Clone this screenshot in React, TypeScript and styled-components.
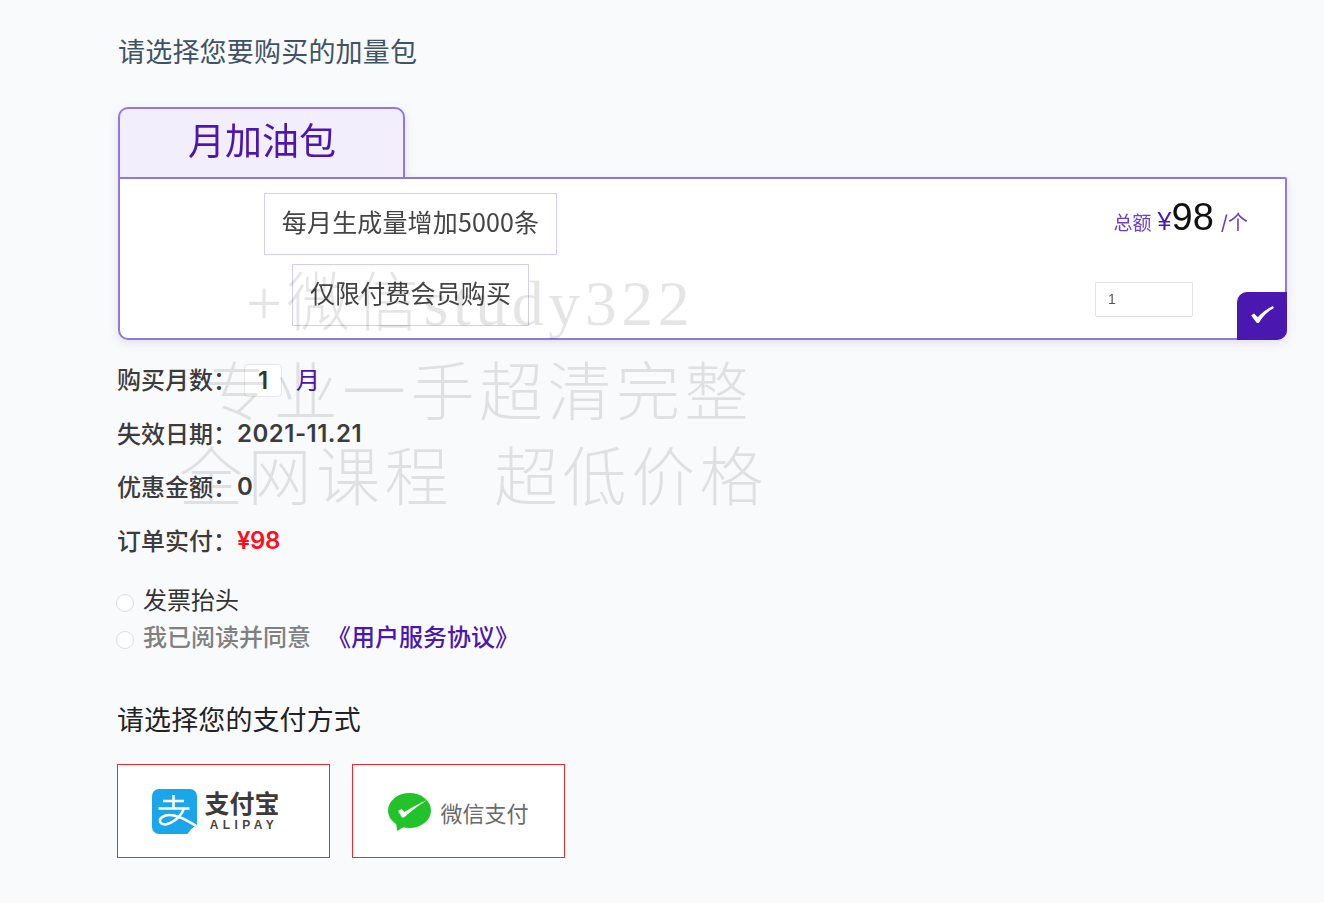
import React from 'react';
import styled, { createGlobalStyle } from 'styled-components';

const purple = '#4a17b0';
const cjk = '"Noto Sans CJK SC", sans-serif';

const GlobalStyle = createGlobalStyle`
  html, body {
    margin: 0;
    padding: 0;
    background: #f9fafc;
    font-family: Inter, ${cjk};
  }
  * {
    box-sizing: border-box;
  }
`;

const rows = [
  { label: '失效日期：', value: '2021-11.21' },
  { label: '优惠金额：', value: '0' },
];

export default function App() {
  return (
    <Page>
      <GlobalStyle />
      <Title>请选择您要购买的加量包</Title>

      <PackageBlock>
        <PackageTab>
          <TabLabel>月加油包</TabLabel>
        </PackageTab>
        <PackageCard>
          <TagColumn>
            <Tag>每月生成量增加5000条</Tag>
            <Tag>仅限付费会员购买</Tag>
          </TagColumn>
          <PriceColumn>
            <PriceLine>
              <PriceNote>总额</PriceNote>
              <Currency>¥</Currency>
              <Amount>98</Amount>
              <PriceUnit>/个</PriceUnit>
            </PriceLine>
            <CountInput defaultValue="1" />
          </PriceColumn>
          <CheckCorner>
            <svg width="23" height="17" viewBox="0 0 24 18" fill="#fff">
              <path d="M0 10 L3 8 L7 12 C11 7 17 3 23 0 L24 2 C17 6 12 11 8 18 L6 18 Z" />
            </svg>
          </CheckCorner>
        </PackageCard>
      </PackageBlock>

      <Summary>
        <SummaryRow>
          <RowLabel>购买月数：</RowLabel>
          <MonthInput defaultValue="1" />
          <MonthUnit>月</MonthUnit>
        </SummaryRow>
        {rows.map((row) => (
          <SummaryRow key={row.label}>
            <RowLabel>{row.label}</RowLabel>
            <RowValue>{row.value}</RowValue>
          </SummaryRow>
        ))}
        <SummaryRow>
          <RowLabel>订单实付：</RowLabel>
          <RowValue $red>¥98</RowValue>
        </SummaryRow>
      </Summary>

      <Options>
        <OptionRow>
          <Radio type="radio" />
          <OptionText>发票抬头</OptionText>
        </OptionRow>
        <OptionRow>
          <Radio type="radio" />
          <OptionText $muted>我已阅读并同意</OptionText>
          <AgreementLink>《用户服务协议》</AgreementLink>
        </OptionRow>
      </Options>

      <PayTitle>请选择您的支付方式</PayTitle>
      <PayMethods>
        <PayButton>
          <AlipayLogo>
            <svg width="45" height="45" viewBox="0 0 45 45">
              <rect width="45" height="45" rx="7" fill="#1ba5ea" />
              <path d="M45 36 C41 38 38 41 35.5 45 L45 45 Z" fill="#fff" />
              <g fill="none" stroke="#fff" strokeWidth="2.6">
                <path d="M11 12 H32 M21.500 6 V19 M6.500 19.500 H37.500" />
                <path d="M32 19.500 C28 30 15 38 9.500 34.500 C4.500 30 12 24.500 22 26.500 C30 28 38 33 45 37.500" />
              </g>
            </svg>
            <AlipayWords>
              <AlipayName>支付宝</AlipayName>
              <AlipayLatin>ALIPAY</AlipayLatin>
            </AlipayWords>
          </AlipayLogo>
        </PayButton>
        <PayButton>
          <WechatLogo>
            <svg width="43" height="38" viewBox="0 0 43 38">
              <ellipse cx="21.500" cy="17.500" rx="21.500" ry="17.500" fill="#22c32a" />
              <path d="M8 28 L9 38 L19 32 Z" fill="#22c32a" />
              <path d="M10 18 L13.500 16 L16.500 19 C23 15 30 11 39 7 C31 12 23 18 16 24.500 L14 24.500 Z" fill="#fff" />
            </svg>
            <WechatName>微信支付</WechatName>
          </WechatLogo>
        </PayButton>
      </PayMethods>

      <Watermark>
        <WatermarkLine $indent={246}>+微信study322</WatermarkLine>
        <WatermarkLine $indent={205} $gap={4}>专业一手超清完整</WatermarkLine>
        <WatermarkLine $indent={179} $gap={-1}>全网课程  超低价格</WatermarkLine>
      </Watermark>
    </Page>
  );
}

const Page = styled.div`
  position: relative;
  width: 1324px;
  height: 903px;
  overflow: hidden;
  padding: 32px 0 0 117px;
`;

const Title = styled.h2`
  margin: 0 0 35px 1px;
  font-size: 27px;
  line-height: 42px;
  height: 40px;
  font-weight: 400;
  letter-spacing: 0.2px;
  color: #3f5365;
`;

const PackageBlock = styled.div`
  width: 1169px;
  margin-left: 1px;
  filter: drop-shadow(0 3px 5px rgba(60, 50, 110, 0.13));
`;

const PackageTab = styled.div`
  width: 287px;
  height: 70px;
  display: flex;
  align-items: center;
  justify-content: center;
  border: 2px solid #9078dc;
  border-bottom: 0;
  border-radius: 10px 10px 0 0;
  background: #f2eefb;
`;

const TabLabel = styled.span`
  margin: 0 0 3px 1px;
  color: ${purple};
  font-size: 37px;
  line-height: 1;
`;

const PackageCard = styled.div`
  position: relative;
  height: 163px;
  display: flex;
  justify-content: space-between;
  border: 2px solid #9078dc;
  border-radius: 0 2px 10px 10px;
  background: #fff;
`;

const TagColumn = styled.div`
  width: 581px;
  padding-top: 14px;
  display: flex;
  flex-direction: column;
  align-items: center;
  gap: 9px;
`;

const Tag = styled.div`
  height: 62px;
  padding: 0 17px 6px;
  display: flex;
  align-items: center;
  border: 1px solid #d6cbf0;
  color: #444;
  font-family: ${cjk};
  font-size: 25px;
  letter-spacing: 0.15px;
  white-space: nowrap;
`;

const PriceColumn = styled.div`
  display: flex;
  flex-direction: column;
  align-items: flex-end;
  justify-content: space-between;
  padding: 17px 37px 21px 0;
`;

const PriceLine = styled.div`
  display: flex;
  align-items: baseline;
  height: 48px;
  color: #6a3fc6;
`;

const PriceNote = styled.span`
  font-size: 19px;
`;

const Currency = styled.span`
  margin-left: 6px;
  font-size: 25px;
  font-family: "Liberation Sans", ${cjk};
  color: ${purple};
`;

const Amount = styled.span`
  font-size: 38px;
  font-family: "Liberation Sans", sans-serif;
  color: #111;
`;

const PriceUnit = styled.span`
  margin-left: 7px;
  font-size: 20px;
`;

const CountInput = styled.input`
  width: 98px;
  height: 35px;
  margin-right: 55px;
  padding: 0 12px 2px;
  border: 1px solid #e2e2e2;
  border-radius: 2px;
  background: #fff;
  color: #555;
  font-family: "Liberation Sans", sans-serif;
  font-size: 14px;
  outline: none;
`;

const CheckCorner = styled.div`
  position: absolute;
  right: -2px;
  bottom: -2px;
  width: 50px;
  height: 48px;
  padding-bottom: 4px;
  display: flex;
  align-items: center;
  justify-content: center;
  background: ${purple};
  border-radius: 10px 0 10px 0;
`;

const Summary = styled.div`
  margin-top: 13px;
`;

const SummaryRow = styled.div`
  height: 53.5px;
  display: flex;
  align-items: center;
  font-size: 24px;
  font-weight: 500;
  color: #3c3c3c;
`;

const RowLabel = styled.span`
  width: 120px;
  margin-top: -2px;
  white-space: nowrap;
`;

const RowValue = styled.span<{ $red?: boolean }>`
  font-weight: 600;
  letter-spacing: ${(p) => (p.$red ? '-0.5px' : '0.5px')};
  color: ${(p) => (p.$red ? '#fb1020' : '#3c3c3c')};
`;

const MonthInput = styled.input`
  width: 38px;
  height: 33px;
  margin: 1px 0 0 7px;
  padding: 0;
  border: 1px solid #e6e6e6;
  border-radius: 4px;
  background: #fff;
  color: #333;
  text-align: center;
  font-family: Inter, sans-serif;
  font-size: 24px;
  font-weight: 600;
  outline: none;
`;

const MonthUnit = styled.span`
  margin: -2px 0 0 14px;
  color: ${purple};
  font-weight: 400;
`;

const Options = styled.div`
  margin-top: 14px;
`;

const OptionRow = styled.div`
  height: 37px;
  display: flex;
  align-items: center;
`;

const Radio = styled.input`
  appearance: none;
  width: 18px;
  height: 18px;
  margin: 7px 9px 0 -1px;
  border: 1px solid #ddd;
  border-radius: 50%;
  background: #fff;
`;

const OptionText = styled.span<{ $muted?: boolean }>`
  margin-top: -3px;
  font-size: 24px;
  color: ${(p) => (p.$muted ? '#808080' : '#333')};
  font-weight: ${(p) => (p.$muted ? 500 : 400)};
`;

const AgreementLink = styled.span`
  margin: -3px 0 0 16px;
  font-size: 24px;
  font-weight: 500;
  color: ${purple};
  white-space: nowrap;
`;

const PayTitle = styled.h3`
  height: 40px;
  margin: 44px 0 25px 0;
  font-size: 27px;
  line-height: 43px;
  font-weight: 400;
  letter-spacing: 0.1px;
  color: #222;
`;

const PayMethods = styled.div`
  display: flex;
  gap: 22px;
`;

const PayButton = styled.div`
  width: 213px;
  height: 94px;
  display: flex;
  align-items: center;
  justify-content: center;
  border: 1px solid #ee2a33;
  background: #fff;
`;

const AlipayLogo = styled.div`
  display: flex;
  align-items: center;
  gap: 7px;
  margin-right: 15px;
`;

const AlipayWords = styled.div`
  display: flex;
  flex-direction: column;
  align-items: center;
`;

const AlipayName = styled.span`
  font-size: 25px;
  line-height: 29px;
  font-weight: 700;
  color: #3f3a39;
`;

const AlipayLatin = styled.span`
  font-family: "Liberation Sans", sans-serif;
  font-size: 12px;
  line-height: 13px;
  font-weight: 700;
  letter-spacing: 4.4px;
  margin-right: -4px;
  color: #4a4543;
`;

const WechatLogo = styled.div`
  display: flex;
  align-items: center;
  gap: 9px;
  margin-top: 2px;
`;

const WechatName = styled.span`
  font-size: 22px;
  color: #6a6a6a;
`;

const Watermark = styled.div`
  position: absolute;
  top: 261px;
  left: 0;
  pointer-events: none;
`;

const WatermarkLine = styled.div<{ $indent: number; $gap?: number }>`
  height: 86px;
  margin-top: ${(p) => p.$gap ?? 0}px;
  padding-left: ${(p) => p.$indent}px;
  font-family: "Liberation Serif", "Noto Sans CJK SC", serif;
  font-size: 64px;
  font-weight: 300;
  line-height: 86px;
  letter-spacing: 4.5px;
  white-space: pre;
  color: rgba(0, 0, 0, 0.1);
`;
